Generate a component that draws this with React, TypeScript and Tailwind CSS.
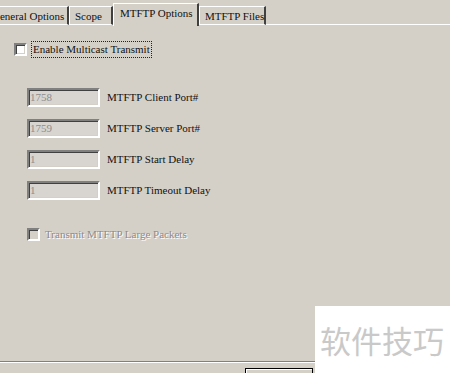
import React from 'react'

const sunken =
  'border-2 border-t-[#808080] border-l-[#808080] border-b-white border-r-white shadow-[inset_1px_1px_0_#404040,inset_-1px_-1px_0_#d4d0c8]'

const ports = [
  { value: '1758', label: 'MTFTP Client Port#' },
  { value: '1759', label: 'MTFTP Server Port#' },
  { value: '1', label: 'MTFTP Start Delay' },
  { value: '1', label: 'MTFTP Timeout Delay' }
]

const Tab = ({ label, active, width }: { label: string; active?: boolean; width: string }) => {
  if (active) {
    return (
      <div
        className={`${width} shrink-0 whitespace-nowrap h-[23px] -mb-px flex items-start pt-[4px] pl-[6px] border-l border-l-white border-t border-t-white border-r-2 border-r-[#404040] bg-[#d4d0c8] z-10`}
      >
        {label}
      </div>
    )
  }
  return (
    <div
      className={`${width} shrink-0 whitespace-nowrap h-[19px] flex items-start pt-[4px] pl-[5px] border-l border-l-white border-t border-t-white border-r-2 border-r-[#404040] border-b border-b-white`}
    >
      {label}
    </div>
  )
}

export default function App() {
  return (
    <div className="relative w-[450px] h-[373px] overflow-hidden bg-[#d4d0c8] text-[11px] leading-none text-[#111] font-['Liberation_Serif',serif] flex flex-col">
      {/* tab strip */}
      <div className="flex items-end h-[25px] -ml-[14px]">
        <Tab label="General Options" width="w-[83px]" />
        <Tab label="Scope" width="w-[44px]" />
        <Tab label="MTFTP Options" width="w-[86px]" active />
        <Tab label="MTFTP Files" width="w-[67px]" />
        <div className="flex-1 h-px bg-white" />
      </div>

      {/* panel */}
      <div className="flex flex-col pl-[14px] pt-[16px]">
        <div className="flex items-center gap-[4px]">
          <div className={`w-[13px] h-[13px] bg-white ${sunken}`} />
          <span className="px-[1px] py-[2px] border border-dotted border-[#222]">Enable Multicast Transmit</span>
        </div>

        <div className="flex flex-col gap-[12px] mt-[30px] pl-[13px]">
          {ports.map((p, i) => (
            <div key={i} className="flex items-center gap-[7px]">
              <div className={`w-[73px] h-[19px] bg-[#d8d5d0] pl-[1px] flex items-center text-[#8c8c8c] ${sunken}`}>
                {p.value}
              </div>
              <span>{p.label}</span>
            </div>
          ))}
        </div>

        <div className="flex items-center gap-[5px] mt-[28px] pl-[13px]">
          <div className={`w-[13px] h-[13px] bg-[#d4d0c8] ${sunken}`} />
          <span className="text-[#8c8c8c] [text-shadow:1px_1px_0_#ffffff]">Transmit MTFTP Large Packets</span>
        </div>
      </div>

      <div className="flex-1" />

      {/* bottom separator + button */}
      <div className="h-[2px] shrink-0 border-t border-t-[#808080] border-b border-b-white mb-[5px]" />
      <div className="flex justify-start pl-[245px]">
        <div className="w-[68px] h-[5px] shrink-0 border border-black border-b-0 shadow-[inset_1px_1px_0_#ffffff]" />
      </div>

      {/* watermark */}
      <div className="absolute left-[315px] top-[306px] w-[135px] h-[67px] bg-white flex items-center pl-[5px]">
        <span className="text-[31px] leading-none text-[#c9c9c9] font-['Noto_Sans_CJK_SC',sans-serif]">软件技巧</span>
      </div>
    </div>
  )
}
